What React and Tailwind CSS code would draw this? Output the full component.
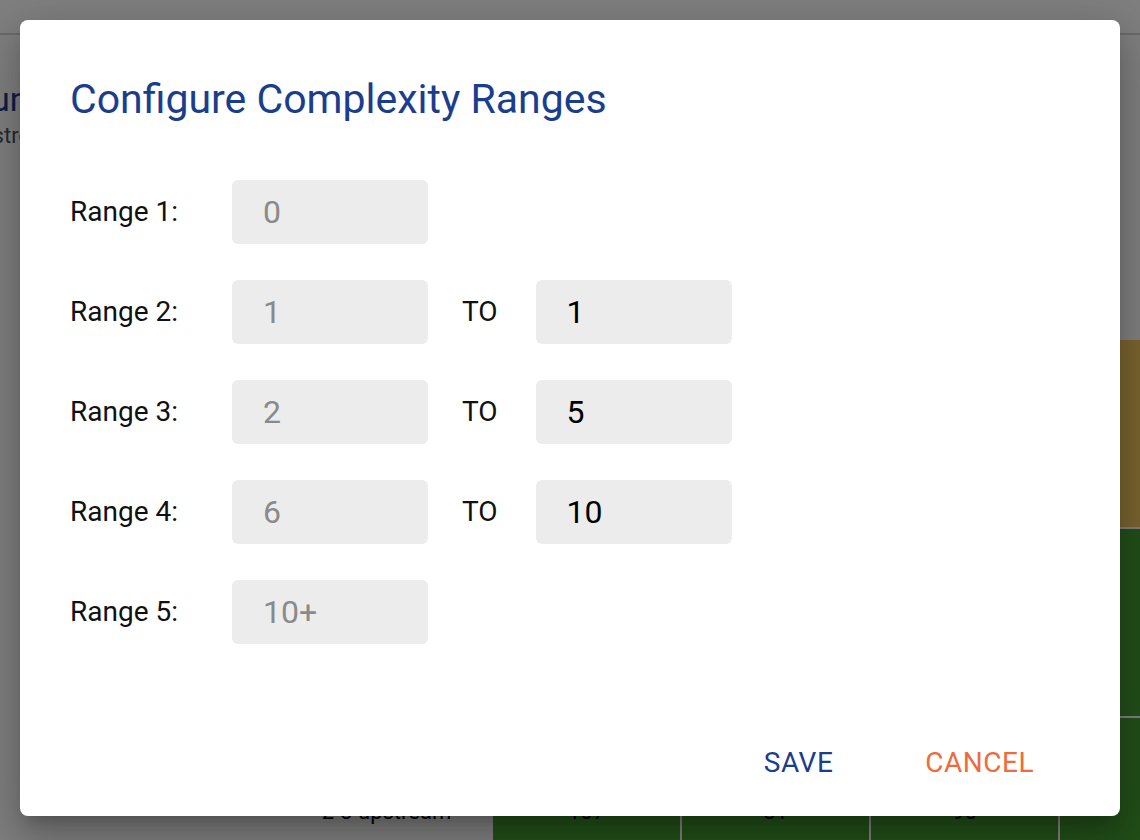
import { useState } from "react";

const ranges = [
  { label: "Range 1:", from: "0" },
  { label: "Range 2:", from: "1", to: "1" },
  { label: "Range 3:", from: "2", to: "5" },
  { label: "Range 4:", from: "6", to: "10" },
  { label: "Range 5:", from: "10+" },
];

const tableRows = [
  { label: "0 upstream", cells: ["412", "96", "58", "23"], colors: ["bg-[#449e32]", "bg-[#449e32]", "bg-[#f4c660]", "bg-[#f4c660]"] },
  { label: "1 upstream", cells: ["233", "74", "41", "12"], colors: ["bg-[#449e32]", "bg-[#449e32]", "bg-[#449e32]", "bg-[#449e32]"] },
  { label: "2-3 upstream", cells: ["107", "81", "90", "8"], colors: ["bg-[#449e32]", "bg-[#449e32]", "bg-[#449e32]", "bg-[#449e32]"] },
];

const App = () => {
  const [values, setValues] = useState(ranges.map((r) => r.to || ""));

  return (
    <div className="relative h-[840px] w-[1140px] overflow-hidden bg-white font-['Roboto',sans-serif]">
      {/* page behind the dialog */}
      <header className="h-[35px] border-b-2 border-[#d4d4d4] bg-white" />

      <h1 className="-ml-[30px] mt-[44px] whitespace-nowrap text-[34px] leading-[40px] text-[#1a3e8c]">
        Run Counts
      </h1>
      <p className="-ml-[34px] mt-[4px] whitespace-nowrap text-[22px] leading-[26px] text-gray-600">
        Upstream jobs
      </p>

      <div className="ml-[282px] mt-[1px] grid grid-cols-[209px_187px_187px_187px_187px] gap-[2px]">
        <div className="col-span-5 h-[188px]" />
        {tableRows.map((row) => (
          <div key={row.label} className="contents">
            <div className="flex h-[187px] items-center justify-center text-[22px] text-black">
              {row.label}
            </div>
            {row.cells.map((c, i) => (
              <div
                key={i}
                className={`flex h-[187px] items-center justify-center text-[22px] text-black ${row.colors[i]}`}
              >
                {c}
              </div>
            ))}
          </div>
        ))}
      </div>

      {/* overlay + dialog */}
      <div className="absolute inset-0 bg-black/50">
        <div className="ml-[20px] mt-[20px] flex h-[796px] w-[1100px] flex-col rounded-[8px] bg-white px-[50px] pt-[59px] shadow-[0_11px_15px_-7px_rgba(0,0,0,0.2),0_24px_38px_3px_rgba(0,0,0,0.14),0_9px_46px_8px_rgba(0,0,0,0.12)]">
          <h2 className="text-[41px] leading-[40px] text-[#1a3e8c]">
            Configure Complexity Ranges
          </h2>

          <div className="mt-[61px] flex flex-col gap-[36px]">
            {ranges.map((r, idx) => (
              <div key={r.label} className="flex h-[64px] items-center">
                <span className="w-[162px] text-[28px] leading-[32px] text-[#111]">
                  {r.label}
                </span>
                <input
                  readOnly
                  value={r.from}
                  className="h-[64px] w-[196px] rounded-[6px] bg-[#ececec] pl-[31px] text-[32px] text-[#8a8a8a] outline-none"
                />
                {r.to && (
                  <>
                    <span className="ml-[34px] text-[28px] leading-[32px] text-[#111]">
                      TO
                    </span>
                    <input
                      value={values[idx]}
                      onChange={(e) => {
                        const next = [...values];
                        next[idx] = e.target.value;
                        setValues(next);
                      }}
                      className="ml-[38px] h-[64px] w-[196px] rounded-[6px] bg-[#ececec] pl-[31px] text-[32px] text-black outline-none"
                    />
                  </>
                )}
              </div>
            ))}
          </div>

          <div className="mt-auto flex justify-end gap-[60px] pb-[31px] pr-[20px]">
            <button className="px-4 py-2 text-[28px] leading-[28px] tracking-[0.5px] text-[#1a3e8c]">
              SAVE
            </button>
            <button className="px-4 py-2 text-[28px] leading-[28px] tracking-[0.5px] text-[#ee6b3d]">
              CANCEL
            </button>
          </div>
        </div>
      </div>
    </div>
  );
};

export default App;
